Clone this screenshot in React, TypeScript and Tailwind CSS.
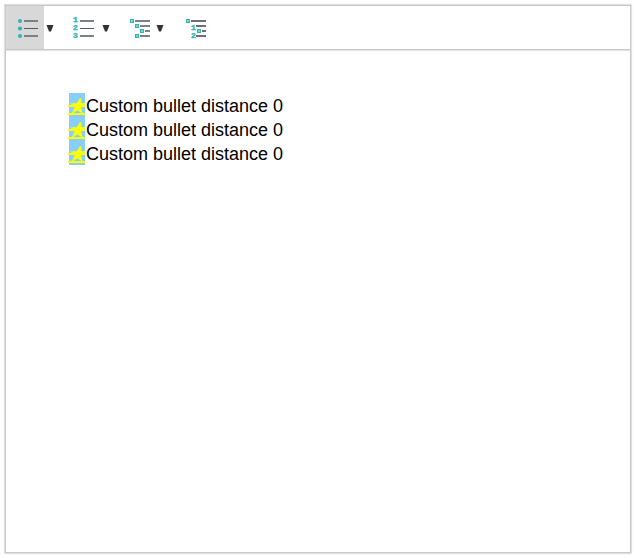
import type { ReactNode } from 'react'
import clsx from 'clsx'

const TEAL = '#35b3b3'
const LINE = '#7b8187'

const items = [
  'Custom bullet distance 0',
  'Custom bullet distance 0',
  'Custom bullet distance 0',
]

function Marker({ x, y }: { x: number; y: number }) {
  return (
    <>
      <rect x={x} y={y} width="4" height="4" fill={TEAL} />
      <rect x={x + 1} y={y + 1} width="2" height="2" fill="#7fd3d3" />
    </>
  )
}

function Line({ x, y, color = LINE }: { x: number; y: number; color?: string }) {
  return <rect x={x} y={y} width={21 - x} height="2" fill={color} />
}

function Digit({ x, y, children }: { x: number; y: number; children: string }) {
  return (
    <text
      x={x}
      y={y}
      fill={TEAL}
      stroke={TEAL}
      strokeWidth="0.4"
      fontSize="8"
      fontWeight="700"
      fontFamily="Liberation Mono, monospace"
    >
      {children}
    </text>
  )
}

function Icon({ children }: { children: ReactNode }) {
  return (
    <svg width="22" height="22" viewBox="0 0 22 22" className="shrink-0 overflow-visible" aria-hidden="true">
      {children}
    </svg>
  )
}

function BulletIcon() {
  return (
    <Icon>
      {[4, 11.5, 19].map((cy) => (
        <circle key={cy} cx="3" cy={cy} r="2.1" fill={TEAL} />
      ))}
      <Line x={7} y={3} />
      <rect x="7" y="11" width="14" height="1" fill="#555b66" />
      <Line x={7} y={18} />
    </Icon>
  )
}

function NumberIcon() {
  return (
    <Icon>
      <Digit x={0} y={5}>1</Digit>
      <Digit x={0} y={13}>2</Digit>
      <Digit x={0} y={21}>3</Digit>
      <Line x={7} y={3} />
      <rect x="7" y="11" width="14" height="1" fill="#555b66" />
      <Line x={7} y={18} />
    </Icon>
  )
}

function MultilevelIcon() {
  return (
    <Icon>
      <Marker x={1} y={2} />
      <Line x={6} y={3} />
      <Marker x={6} y={7} />
      <Line x={11} y={8} />
      <Marker x={11} y={12} />
      <Line x={16} y={13} />
      <Marker x={6} y={17} />
      <Line x={11} y={18} />
    </Icon>
  )
}

function OutlineIcon() {
  return (
    <Icon>
      <Marker x={1} y={2} />
      <Line x={6} y={3} color="#707070" />
      <Digit x={6} y={13}>1</Digit>
      <Line x={11} y={8} color="#707070" />
      <Marker x={12} y={12} />
      <Line x={17} y={13} color="#707070" />
      <Digit x={6} y={21}>2</Digit>
      <Line x={11} y={18} color="#707070" />
    </Icon>
  )
}

// Slanted star with a strike line and an underline
function StarBullet() {
  return (
    <svg
      width="16"
      height="24"
      viewBox="0 0 16 24"
      className="shrink-0 overflow-visible bg-[#87cefa]"
      aria-hidden="true"
    >
      <path
        d="M11.5 5L12 10.5H16L11.5 14L13 20L8.5 17L3.5 20L6.2 14.2L2 10.8L8 10.5z"
        fill="#ffff00"
        stroke="#ffff00"
        strokeWidth="0.8"
        strokeLinejoin="round"
      />
      <rect x="-1" y="12" width="17" height="2" fill="#ffff00" />
      <rect x="-1" y="20" width="17" height="2" fill="#ffff00" />
    </svg>
  )
}

function ToolButton({
  label,
  active,
  width = 'w-[38px]',
  children,
}: {
  label: string
  active?: boolean
  width?: string
  children: ReactNode
}) {
  return (
    <button
      type="button"
      aria-label={label}
      aria-pressed={active}
      className={clsx('flex items-center pl-[11px]', width, active && 'bg-[#d8d8d8]')}
    >
      {children}
    </button>
  )
}

function MenuButton({ label, width = 'w-3' }: { label: string; width?: string }) {
  return (
    <button type="button" aria-label={label} className={clsx('flex items-center justify-center', width)}>
      <svg width="8" height="8" viewBox="0 0 8 8" className="shrink-0" aria-hidden="true">
        <path d="M0.5 1h7L5 7.5H3z" fill="#333" />
      </svg>
    </button>
  )
}

export default function App() {
  return (
    <main className="h-screen bg-white pt-[5px] pr-[3px] pb-[5px] pl-[5px] text-black">
      <div className="flex h-full flex-col border border-[#c8c8c8] shadow-[0_0_1px_1px_#e0e0e0]">
        <div
          role="toolbar"
          aria-label="List formatting"
          className="flex h-11 shrink-0 gap-1.5 border-b border-[#c8c8c8] shadow-[0_1px_1px_#e4e4e4]"
        >
          <div className="flex">
            <ToolButton label="Bullets" active>
              <BulletIcon />
            </ToolButton>
            <MenuButton label="Bullet options" />
          </div>
          <div className="flex">
            <ToolButton label="Numbering">
              <NumberIcon />
            </ToolButton>
            <MenuButton label="Numbering options" />
          </div>
          <div className="flex">
            <ToolButton label="Multilevel list" width="w-[34px]">
              <MultilevelIcon />
            </ToolButton>
            <MenuButton label="Multilevel list options" width="w-4" />
          </div>
          <ToolButton label="Outline list">
            <OutlineIcon />
          </ToolButton>
        </div>

        <ul className="flex-1 px-[63px] pt-[43px] font-['Liberation_Sans',Arial,sans-serif] text-[18px] leading-[22px]">
          {items.map((item, i) => (
            <li key={i} className="flex">
              <StarBullet />
              <span className="pt-0.5 pl-px">{item}</span>
            </li>
          ))}
        </ul>
      </div>
    </main>
  )
}
